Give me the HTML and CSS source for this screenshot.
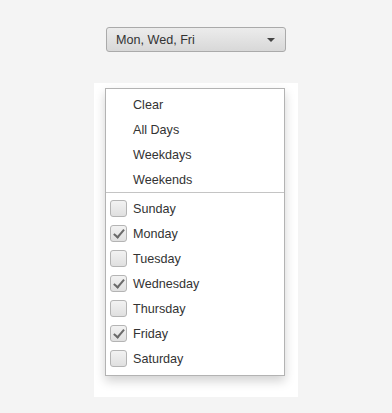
FILE: index.html
```html
<!DOCTYPE html>
<html lang="en">

<head>
    <meta charset="UTF-8">
    <meta name="viewport" content="width=device-width, initial-scale=1">
    <title>Day Picker</title>
    <link rel="stylesheet" href="styles.css">
</head>

<body>
    <div class="combo">
        <span class="combo-value">Mon, Wed, Fri</span>
        <span class="combo-arrow"></span>
    </div>

    <div class="panel">
        <div class="popup">
            <div class="menu-group">
                <div class="item">Clear</div>
                <div class="item">All Days</div>
                <div class="item">Weekdays</div>
                <div class="item">Weekends</div>
            </div>
            <div class="separator"></div>
            <div class="menu-group">
                <div class="item check"><span class="box"></span>Sunday</div>
                <div class="item check"><span class="box checked"></span>Monday</div>
                <div class="item check"><span class="box"></span>Tuesday</div>
                <div class="item check"><span class="box checked"></span>Wednesday</div>
                <div class="item check"><span class="box"></span>Thursday</div>
                <div class="item check"><span class="box checked"></span>Friday</div>
                <div class="item check"><span class="box"></span>Saturday</div>
            </div>
        </div>
    </div>
</body>

</html>
```

FILE: styles.css
```css
:root {
    --background-color: #f4f4f4;
    --element-background-color: #fff;
    --text-color: #333;
    --border-color: #b3b3b3;
}

body {
    font-family: "Liberation Sans", Arial, sans-serif;
    font-size: 12.6px;
    color: var(--text-color);
    margin: 0;
    padding: 27px 0 0 94px;
    background-color: var(--background-color);
}

.combo {
    box-sizing: border-box;
    width: 180px;
    height: 25px;
    margin-left: 12px;
    padding: 0 10px 0 9px;
    display: flex;
    align-items: center;
    justify-content: space-between;
    border: 1px solid #aaa;
    border-radius: 3px;
    background: linear-gradient(to bottom, #ececec, #d8d8d8);
}

.combo-arrow {
    width: 0;
    height: 0;
    border-left: 4px solid transparent;
    border-right: 4px solid transparent;
    border-top: 4px solid #444;
}

.panel {
    box-sizing: border-box;
    width: 204px;
    height: 314px;
    margin-top: 31px;
    padding: 5px 13px 0 11px;
    background-color: var(--element-background-color);
}

.popup {
    box-sizing: border-box;
    width: 180px;
    border: 1px solid var(--border-color);
    padding: 3px 0 4px 0;
    background-color: var(--element-background-color);
    box-shadow: 0 5px 10px rgba(0, 0, 0, 0.18);
}

.item {
    height: 25px;
    display: flex;
    align-items: center;
    padding-left: 27px;
}

.separator {
    height: 1px;
    margin: 0 0 3px 0;
    background-color: #c4c4c4;
}

.item.check {
    padding-left: 4px;
}

.box {
    box-sizing: border-box;
    width: 17px;
    height: 17px;
    margin-right: 6px;
    border: 1px solid #b4b4b4;
    border-radius: 3px;
    background: linear-gradient(to bottom, #f2f2f2, #e0e0e0);
    position: relative;
}

.box.checked::after {
    content: '';
    position: absolute;
    left: 5px;
    top: 1px;
    width: 4px;
    height: 9px;
    border-right: 2px solid #6a6a6a;
    border-bottom: 2px solid #6a6a6a;
    transform: rotate(40deg);
}
```
